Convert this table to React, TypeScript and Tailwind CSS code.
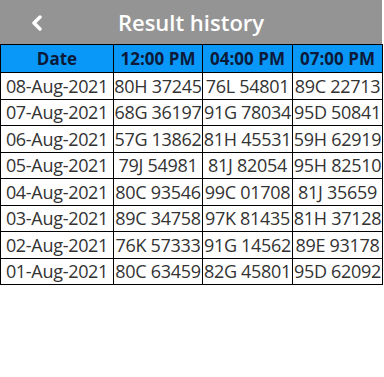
import React from 'react';

const rows = [
    ["08-Aug-2021", "80H 37245", "76L 54801", "89C 22713"],
    ["07-Aug-2021", "68G 36197", "91G 78034", "95D 50841"],
    ["06-Aug-2021", "57G 13862", "81H 45531", "59H 62919"],
    ["05-Aug-2021", "79J 54981", "81J 82054", "95H 82510"],
    ["04-Aug-2021", "80C 93546", "99C 01708", "81J 35659"],
    ["03-Aug-2021", "89C 34758", "97K 81435", "81H 37128"],
    ["02-Aug-2021", "76K 57333", "91G 14562", "89E 93178"],
    ["01-Aug-2021", "80C 63459", "82G 45801", "95D 62092"],
];

export default function App() {
    return (
        <div className="w-[384px] h-[377px] bg-white font-['Open_Sans',sans-serif]">
            {/* Top bar */}
            <div className="relative h-[44px] w-[382px] bg-[#949494] flex items-center justify-center">
                <svg className="absolute left-[30px] top-[15px]" width="14" height="16" viewBox="0 0 14 16">
                    <path d="M10 2 L4 8 L10 14" stroke="white" strokeWidth="3.5" fill="none" strokeLinecap="round" strokeLinejoin="round" />
                </svg>
                <h1 className="text-white text-[22px] font-semibold">Result history</h1>
            </div>

            {/* Results table */}
            <table className="w-[382px] border-collapse table-fixed">
                <colgroup>
                    <col className="w-[113px]" />
                    <col className="w-[89px]" />
                    <col className="w-[90px]" />
                    <col className="w-[90px]" />
                </colgroup>
                <thead>
                    <tr className="bg-[#0a98f8] h-[28px]">
                        {["Date", "12:00 PM", "04:00 PM", "07:00 PM"].map((h) => (
                            <th key={h} className="border border-black text-[17px] font-bold text-[#0c1a3a] text-center p-0 leading-none whitespace-nowrap">{h}</th>
                        ))}
                    </tr>
                </thead>
                <tbody>
                    {rows.map((r) => (
                        <tr key={r[0]} className="h-[26.5px]">
                            {r.map((c, i) => (
                                <td key={i} className="border border-black text-[18px] text-[#333] text-center p-0 whitespace-nowrap leading-none tracking-[-0.3px]">{c}</td>
                            ))}
                        </tr>
                    ))}
                </tbody>
            </table>
        </div>
    );
}
